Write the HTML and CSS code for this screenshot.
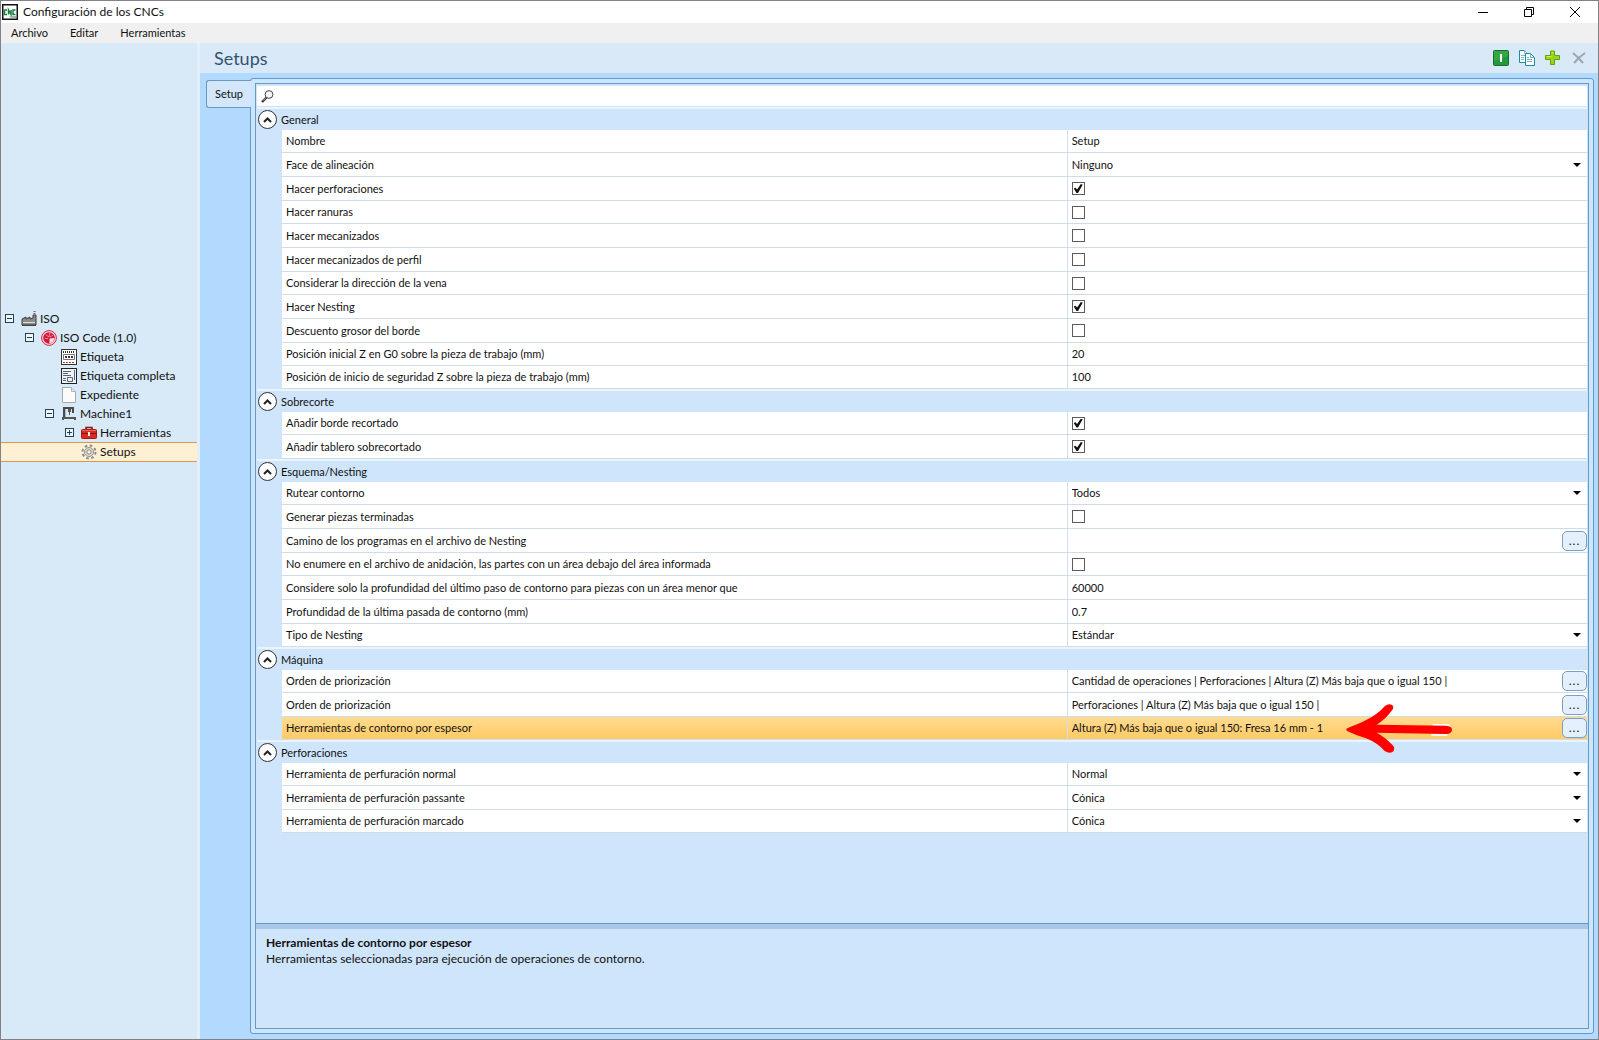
FILE: index.html
```html
<!DOCTYPE html>
<html lang="es">
<head>
    <meta charset="UTF-8">
    <meta name="viewport" content="width=device-width, initial-scale=1.0">
    <title>Configuración de los CNCs</title>
    <link rel="stylesheet" href="styles.css">
</head>
<body>
    <div class="window">
        <header class="titlebar">
            <svg class="app-icon" width="16" height="16" viewBox="0 0 16 16">
                <rect x=".75" y=".75" width="14.5" height="14.5" fill="#fff" stroke="#111" stroke-width="1.5"/>
                <path d="M5 6H2.500V10.500H5M6.500 10.500V6L9 10.500V6M13.500 6H11V10.500H13.500" fill="none" stroke="#17803f" stroke-width="1.500"/>
                <path d="M7 12h7v2H9z" fill="#a5b3aa"/>
            </svg>
            <h1>Configuración de los CNCs</h1>
            <div class="window-buttons">
                <button type="button" aria-label="Minimizar">
                    <svg width="10" height="10" viewBox="0 0 10 10"><path d="M0 5.500h10" stroke="#000"/></svg>
                </button>
                <button type="button" aria-label="Restaurar">
                    <svg width="10" height="10" viewBox="0 0 10 10" fill="none" stroke="#000"><path d="M.5 2.500h7v7h-7zM2.500 2.500v-2h7v7h-2"/></svg>
                </button>
                <button type="button" aria-label="Cerrar">
                    <svg width="10" height="10" viewBox="0 0 10 10"><path d="M0 0l10 10M10 0L0 10" stroke="#000"/></svg>
                </button>
            </div>
        </header>

        <nav class="menubar">
            <button type="button">Archivo</button>
            <button type="button">Editar</button>
            <button type="button">Herramientas</button>
        </nav>

        <div class="workspace">
            <aside class="sidebar">
                <ul class="tree">
                    <li class="node level-0">
                        <button type="button" class="expander" aria-label="Contraer ISO"></button>
                        <svg width="16" height="16" viewBox="0 0 16 16">
                            <path d="M1 14V8l4-2v2l4-2v2l3-1V4h3v10z" fill="#8b8b8b" stroke="#3e3e3e"/>
                            <path d="M2 11.500h12" stroke="#ddd"/>
                            <path d="M13.500 0v3" stroke="#666" stroke-width="2" stroke-dasharray="1 1"/>
                            <path d="M1 14.500h14" stroke="#444"/>
                        </svg>
                        <a href="#">ISO</a>
                    </li>
                    <li class="node level-1">
                        <button type="button" class="expander" aria-label="Contraer ISO Code"></button>
                        <svg width="16" height="16" viewBox="0 0 16 16">
                            <circle cx="8" cy="8" r="7.400" fill="#f9dbe1" stroke="#d61f45"/>
                            <circle cx="8" cy="8" r="5.800" fill="#cf1b3f"/>
                            <path d="M8.500 8.500V13.500Q13 12.500 13.500 8z" fill="#f9dbe1"/>
                            <path d="M5 5l3 2M4 8.500h3M9 2.500L8 7M12 5L9 7" stroke="#f3a9b8" stroke-width=".8"/>
                        </svg>
                        <a href="#">ISO Code (1.0)</a>
                    </li>
                    <li class="node level-2">
                        <svg width="16" height="16" viewBox="0 0 16 16">
                            <rect x=".5" y=".5" width="15" height="15" fill="#fff" stroke="#333"/>
                            <path d="M2 3h12" stroke="#333" stroke-width="2" stroke-dasharray="1 1"/>
                            <path d="M2.500 5.500h11v5h-11z" fill="none" stroke="#777"/>
                            <path d="M4 8h8" stroke="#333" stroke-width="2" stroke-dasharray="2 1"/>
                            <path d="M2 13.500h12" stroke="#b33" stroke-dasharray="2 1"/>
                        </svg>
                        <a href="#">Etiqueta</a>
                    </li>
                    <li class="node level-2">
                        <svg width="16" height="16" viewBox="0 0 16 16">
                            <rect x=".5" y=".5" width="15" height="15" fill="#eaf1fa" stroke="#222"/>
                            <path d="M2 3.500h8M2 5.500h5M2 7.500h8M2 10.500h3M2 12.500h3M13.500 2v10M6.500 9.500h5v4h-5z" fill="none" stroke="#5d6572"/>
                        </svg>
                        <a href="#">Etiqueta completa</a>
                    </li>
                    <li class="node level-2">
                        <svg width="16" height="16" viewBox="0 0 16 16">
                            <path d="M1.500.5h9l4 4v11h-13z" fill="#fbfbfb" stroke="#a9a9a9"/>
                            <path d="M10.500.5v4h4" fill="#e6e6e6" stroke="#b5b5b5"/>
                        </svg>
                        <a href="#">Expediente</a>
                    </li>
                    <li class="node level-2 has-children">
                        <button type="button" class="expander" aria-label="Contraer Machine1"></button>
                        <svg width="16" height="16" viewBox="0 0 16 16">
                            <path d="M3 11V2h9v5" fill="none" stroke="#4a4a4a" stroke-width="2"/>
                            <path d="M7 3h3v3H9v3H8V6H7z" fill="#555"/>
                            <path d="M1 11h14v3h-2v-1H3v1H1z" fill="#555"/>
                            <path d="M4.500 3v8" stroke="#b5b5b5"/>
                        </svg>
                        <a href="#">Machine1</a>
                    </li>
                    <li class="node level-3 has-children">
                        <button type="button" class="expander collapsed" aria-label="Expandir Herramientas"></button>
                        <svg width="16" height="16" viewBox="0 0 16 16">
                            <path d="M5 5V2.500h6V5" fill="none" stroke="#7d1712" stroke-width="1.500"/>
                            <rect x=".5" y="4.500" width="15" height="9" rx="1" fill="#dc2a20" stroke="#a31810"/>
                            <path d="M1 8.500h14" stroke="#8e120c"/>
                            <path d="M1 5.500h14" stroke="#f0685f"/>
                            <rect x="7" y="7" width="2" height="4" fill="#eee"/>
                        </svg>
                        <a href="#">Herramientas</a>
                    </li>
                    <li class="node level-3 selected">
                        <svg width="16" height="16" viewBox="0 0 16 16">
                            <circle cx="8" cy="8" r="6.500" fill="none" stroke="#8c8c8c" stroke-width="2" stroke-dasharray="2.600 2.500"/>
                            <circle cx="8" cy="8" r="4.500" fill="#f4ead9" stroke="#8f8f8f"/>
                            <circle cx="8" cy="8" r="3.500" fill="none" stroke="#cfcfcf"/>
                            <circle cx="8" cy="8" r="2.200" fill="#fdf0d4" stroke="#858585"/>
                        </svg>
                        <a href="#">Setups</a>
                    </li>
                </ul>
            </aside>

            <main class="content">
                <div class="content-header">
                    <h2>Setups</h2>
                    <div class="toolbar">
                        <button type="button" aria-label="Activar">
                            <svg width="16" height="16" viewBox="0 0 16 16">
                                <rect x=".5" y=".5" width="15" height="15" rx="1" fill="#1f9a3c" stroke="#14702b"/>
                                <path d="M1 1h14v5L1 11z" fill="#48b04d" opacity=".6"/>
                                <path d="M8 4v8" stroke="#fff" stroke-width="2"/>
                            </svg>
                        </button>
                        <button type="button" aria-label="Duplicar">
                            <svg width="16" height="16" viewBox="0 0 16 16" fill="#fff" stroke="#1e8aa3">
                                <path d="M.5.500h5l3 3v9h-8z"/>
                                <path d="M5.500.5v3h3M2 5.500h4M2 7.500h3M2 9.500h3" stroke="#7cc0cf"/>
                                <path d="M6.500 3.500h5l4 4v8h-9z"/>
                                <path d="M11.500 3.500v4h4M8 7.500h2M8 9.500h5M8 11.500h5" fill="none" stroke="#6bb6c7"/>
                            </svg>
                        </button>
                        <button type="button" aria-label="Agregar">
                            <svg width="16" height="16" viewBox="0 0 16 16">
                                <path d="M5.500 1h4v4.500H14.500v4H9.500V14.500h-4V9.500H.5v-4h5z" fill="#9bd616" stroke="#5fa315"/>
                                <path d="M6.500 2.500h2M1.500 6.500h5" stroke="#cdf06b"/>
                            </svg>
                        </button>
                        <button type="button" aria-label="Eliminar">
                            <svg width="16" height="16" viewBox="0 0 16 16" fill="none" stroke="#9da5ad">
                                <path d="M2 3q5 4 10 10" stroke-width="2"/>
                                <path d="M14 3Q8 7 3 13" stroke-width="2"/>
                            </svg>
                        </button>
                    </div>
                </div>

                <div class="tab-area">
                    <div class="tabs">
                        <button type="button" class="tab">Setup</button>
                    </div>
                    <div class="tab-page">
                        <div class="property-grid">
                            <label class="search">
                                <svg width="13" height="13" viewBox="0 0 13 13">
                                    <circle cx="8" cy="4.500" r="3.900" fill="#f5f5f5" stroke="#444"/>
                                    <path d="M5.500 7.500L1 12" stroke="#333" stroke-width="2.400"/>
                                    <path d="M5 7.600L2 10.600" stroke="#ccc" stroke-width=".8"/>
                                </svg>
                                <input type="search" aria-label="Buscar">
                            </label>

                            <div class="properties">
                                <table>
                                    <colgroup>
                                        <col class="col-gutter">
                                        <col class="col-name">
                                        <col>
                                    </colgroup>
                                    <tbody>
                                        <tr class="group">
                                            <th colspan="3"><div class="group-title"><button type="button" aria-label="Contraer General"><svg width="9" height="6" viewBox="0 0 9 6"><path d="M1 5l3.500-3.500L8 5" fill="none" stroke="#222" stroke-width="2"/></svg></button>General</div></th>
                                        </tr>
                                        <tr>
                                            <td class="gutter"></td>
                                            <td><label for="nombre">Nombre</label></td>
                                            <td class="value"><input type="text" id="nombre" value="Setup"></td>
                                        </tr>
                                        <tr>
                                            <td class="gutter"></td>
                                            <td><label for="face">Face de alineación</label></td>
                                            <td class="value"><div class="combo"><select id="face"><option>Ninguno</option></select><svg width="8" height="4" viewBox="0 0 8 4"><path d="M0 0h8L4 4z"/></svg></div></td>
                                        </tr>
                                        <tr>
                                            <td class="gutter"></td>
                                            <td><label for="perforaciones">Hacer perforaciones</label></td>
                                            <td class="value"><input type="checkbox" id="perforaciones" checked></td>
                                        </tr>
                                        <tr>
                                            <td class="gutter"></td>
                                            <td><label for="ranuras">Hacer ranuras</label></td>
                                            <td class="value"><input type="checkbox" id="ranuras"></td>
                                        </tr>
                                        <tr>
                                            <td class="gutter"></td>
                                            <td><label for="mecanizados">Hacer mecanizados</label></td>
                                            <td class="value"><input type="checkbox" id="mecanizados"></td>
                                        </tr>
                                        <tr>
                                            <td class="gutter"></td>
                                            <td><label for="perfil">Hacer mecanizados de perfil</label></td>
                                            <td class="value"><input type="checkbox" id="perfil"></td>
                                        </tr>
                                        <tr>
                                            <td class="gutter"></td>
                                            <td><label for="vena">Considerar la dirección de la vena</label></td>
                                            <td class="value"><input type="checkbox" id="vena"></td>
                                        </tr>
                                        <tr>
                                            <td class="gutter"></td>
                                            <td><label for="nesting">Hacer Nesting</label></td>
                                            <td class="value"><input type="checkbox" id="nesting" checked></td>
                                        </tr>
                                        <tr>
                                            <td class="gutter"></td>
                                            <td><label for="descuento">Descuento grosor del borde</label></td>
                                            <td class="value"><input type="checkbox" id="descuento"></td>
                                        </tr>
                                        <tr>
                                            <td class="gutter"></td>
                                            <td><label for="posicion-z">Posición inicial Z en G0 sobre la pieza de trabajo (mm)</label></td>
                                            <td class="value"><input type="text" id="posicion-z" value="20"></td>
                                        </tr>
                                        <tr>
                                            <td class="gutter"></td>
                                            <td><label for="seguridad-z">Posición de inicio de seguridad Z sobre la pieza de trabajo (mm)</label></td>
                                            <td class="value"><input type="text" id="seguridad-z" value="100"></td>
                                        </tr>
                                    </tbody>
                                    <tbody>
                                        <tr class="group">
                                            <th colspan="3"><div class="group-title"><button type="button" aria-label="Contraer Sobrecorte"><svg width="9" height="6" viewBox="0 0 9 6"><path d="M1 5l3.500-3.500L8 5" fill="none" stroke="#222" stroke-width="2"/></svg></button>Sobrecorte</div></th>
                                        </tr>
                                        <tr>
                                            <td class="gutter"></td>
                                            <td><label for="borde">Añadir borde recortado</label></td>
                                            <td class="value"><input type="checkbox" id="borde" checked></td>
                                        </tr>
                                        <tr>
                                            <td class="gutter"></td>
                                            <td><label for="tablero">Añadir tablero sobrecortado</label></td>
                                            <td class="value"><input type="checkbox" id="tablero" checked></td>
                                        </tr>
                                    </tbody>
                                    <tbody>
                                        <tr class="group">
                                            <th colspan="3"><div class="group-title"><button type="button" aria-label="Contraer Esquema/Nesting"><svg width="9" height="6" viewBox="0 0 9 6"><path d="M1 5l3.500-3.500L8 5" fill="none" stroke="#222" stroke-width="2"/></svg></button>Esquema/Nesting</div></th>
                                        </tr>
                                        <tr>
                                            <td class="gutter"></td>
                                            <td><label for="rutear">Rutear contorno</label></td>
                                            <td class="value"><div class="combo"><select id="rutear"><option>Todos</option></select><svg width="8" height="4" viewBox="0 0 8 4"><path d="M0 0h8L4 4z"/></svg></div></td>
                                        </tr>
                                        <tr>
                                            <td class="gutter"></td>
                                            <td><label for="terminadas">Generar piezas terminadas</label></td>
                                            <td class="value"><input type="checkbox" id="terminadas"></td>
                                        </tr>
                                        <tr>
                                            <td class="gutter"></td>
                                            <td><label for="camino">Camino de los programas en el archivo de Nesting</label></td>
                                            <td class="value"><div class="picker"><input type="text" id="camino"><button type="button">...</button></div></td>
                                        </tr>
                                        <tr>
                                            <td class="gutter"></td>
                                            <td><label for="enumere">No enumere en el archivo de anidación, las partes con un área debajo del área informada</label></td>
                                            <td class="value"><input type="checkbox" id="enumere"></td>
                                        </tr>
                                        <tr>
                                            <td class="gutter"></td>
                                            <td><label for="area">Considere solo la profundidad del último paso de contorno para piezas con un área menor que</label></td>
                                            <td class="value"><input type="text" id="area" value="60000"></td>
                                        </tr>
                                        <tr>
                                            <td class="gutter"></td>
                                            <td><label for="profundidad">Profundidad de la última pasada de contorno (mm)</label></td>
                                            <td class="value"><input type="text" id="profundidad" value="0.7"></td>
                                        </tr>
                                        <tr>
                                            <td class="gutter"></td>
                                            <td><label for="tipo">Tipo de Nesting</label></td>
                                            <td class="value"><div class="combo"><select id="tipo"><option>Estándar</option></select><svg width="8" height="4" viewBox="0 0 8 4"><path d="M0 0h8L4 4z"/></svg></div></td>
                                        </tr>
                                    </tbody>
                                    <tbody>
                                        <tr class="group">
                                            <th colspan="3"><div class="group-title"><button type="button" aria-label="Contraer Máquina"><svg width="9" height="6" viewBox="0 0 9 6"><path d="M1 5l3.500-3.500L8 5" fill="none" stroke="#222" stroke-width="2"/></svg></button>Máquina</div></th>
                                        </tr>
                                        <tr>
                                            <td class="gutter"></td>
                                            <td><label for="orden-1">Orden de priorización</label></td>
                                            <td class="value"><div class="picker"><input type="text" id="orden-1" value="Cantidad de operaciones | Perforaciones | Altura (Z) Más baja que o igual 150 |"><button type="button">...</button></div></td>
                                        </tr>
                                        <tr>
                                            <td class="gutter"></td>
                                            <td><label for="orden-2">Orden de priorización</label></td>
                                            <td class="value"><div class="picker"><input type="text" id="orden-2" value="Perforaciones | Altura (Z) Más baja que o igual 150 |"><button type="button">...</button></div></td>
                                        </tr>
                                        <tr class="current">
                                            <td class="gutter"></td>
                                            <td><label for="contorno">Herramientas de contorno por espesor</label></td>
                                            <td class="value">
                                                <div class="picker">
                                                    <input type="text" id="contorno" value="Altura (Z) Más baja que o igual 150: Fresa 16 mm - 1">
                                                    <button type="button">...</button>
                                                    <svg class="pointer" width="106" height="50" viewBox="0 0 318 150">
                                                        <path d="M260 63h50v8h-50zM256 92h48v6h-48z" fill="#fff"/>
                                                        <path d="M1 77C40 62 90 42 116 10Q128 0 138 6Q146 12 138 22Q120 48 92 65L300 68Q318 70 318 80Q318 92 300 93L92 89Q120 104 143 130Q148 142 138 148Q128 152 116 144Q95 120 60 106Q30 97 3 84Q0 80 1 77Z" fill="#f00"/>
                                                    </svg>
                                                </div>
                                            </td>
                                        </tr>
                                    </tbody>
                                    <tbody>
                                        <tr class="group">
                                            <th colspan="3"><div class="group-title"><button type="button" aria-label="Contraer Perforaciones"><svg width="9" height="6" viewBox="0 0 9 6"><path d="M1 5l3.500-3.500L8 5" fill="none" stroke="#222" stroke-width="2"/></svg></button>Perforaciones</div></th>
                                        </tr>
                                        <tr>
                                            <td class="gutter"></td>
                                            <td><label for="normal">Herramienta de perfuración normal</label></td>
                                            <td class="value"><div class="combo"><select id="normal"><option>Normal</option></select><svg width="8" height="4" viewBox="0 0 8 4"><path d="M0 0h8L4 4z"/></svg></div></td>
                                        </tr>
                                        <tr>
                                            <td class="gutter"></td>
                                            <td><label for="passante">Herramienta de perfuración passante</label></td>
                                            <td class="value"><div class="combo"><select id="passante"><option>Cónica</option></select><svg width="8" height="4" viewBox="0 0 8 4"><path d="M0 0h8L4 4z"/></svg></div></td>
                                        </tr>
                                        <tr>
                                            <td class="gutter"></td>
                                            <td><label for="marcado">Herramienta de perfuración marcado</label></td>
                                            <td class="value"><div class="combo"><select id="marcado"><option>Cónica</option></select><svg width="8" height="4" viewBox="0 0 8 4"><path d="M0 0h8L4 4z"/></svg></div></td>
                                        </tr>
                                    </tbody>
                                </table>
                            </div>

                            <section class="description">
                                <h3>Herramientas de contorno por espesor</h3>
                                <p>Herramientas seleccionadas para ejecución de operaciones de contorno.</p>
                            </section>
                        </div>
                    </div>
                </div>
            </main>
        </div>
    </div>
</body>
</html>
```
FILE: styles.css
```css
* {
    margin: 0;
    padding: 0;
    box-sizing: border-box;
}

body {
    font-family: Lato, "Open Sans", sans-serif;
    font-size: 12px;
    line-height: 16px;
    color: #111;
}

button,
input,
select {
    font: inherit;
    color: inherit;
    background: none;
    border: none;
    outline: none;
}

svg {
    display: block;
    flex: none;
}

.window {
    display: flex;
    flex-direction: column;
    height: 100vh;
    border: 1px solid #808288;
    background: #fff;
}

/* Title bar and menu */

.titlebar {
    display: flex;
    align-items: center;
    gap: 5px;
    height: 22px;
    padding-left: 1px;
}

.titlebar h1 {
    flex: 1;
    font-size: 12px;
    font-weight: 400;
}

.window-buttons {
    display: flex;
}

.window-buttons button {
    display: flex;
    align-items: center;
    justify-content: center;
    width: 46px;
    height: 20px;
}

.menubar {
    display: flex;
    gap: 22px;
    height: 20px;
    padding-left: 10px;
    background: #f0f0f0;
    font-size: 11px;
}

.workspace {
    display: flex;
    flex: 1;
    min-height: 0;
}

/* Tree */

.sidebar {
    flex: none;
    width: 199px;
    padding-top: 266px;
    background: #d8e9f7;
    border-right: 3px solid #e4effa;
}

.tree {
    list-style: none;
}

.node {
    display: flex;
    align-items: center;
    gap: 3px;
    height: 19px;
}

.node a {
    color: inherit;
    text-decoration: none;
}

.level-0 {
    padding-left: 4px;
}

.level-1 {
    padding-left: 24px;
}

.level-2 {
    padding-left: 60px;
}

.level-2.has-children {
    padding-left: 44px;
}

.level-3 {
    padding-left: 80px;
}

.level-3.has-children {
    padding-left: 64px;
}

.node.selected {
    height: 20px;
    background: #fdf0d4;
    border-top: 1px solid #d99b4a;
    border-bottom: 1px solid #d99b4a;
}

.expander {
    width: 9px;
    height: 9px;
    margin-right: 4px;
    border: 1px solid #23414f;
    background: linear-gradient(#23414f, #23414f) center / 5px 1px no-repeat #eef6fc;
}

.expander.collapsed {
    background: linear-gradient(#23414f, #23414f) center / 5px 1px no-repeat,
        linear-gradient(#23414f, #23414f) center / 1px 5px no-repeat #eef6fc;
}

/* Content */

.content {
    display: flex;
    flex: 1;
    flex-direction: column;
    min-width: 0;
    background: #b2daff;
}

.content-header {
    display: flex;
    align-items: center;
    justify-content: space-between;
    height: 30px;
    padding: 0 11px 0 14px;
    background: #d9e9f8;
}

.content-header h2 {
    font-size: 18px;
    font-weight: 400;
    color: #34536f;
}

.toolbar {
    display: flex;
    gap: 10px;
}

.tab-area {
    display: flex;
    flex: 1;
    min-height: 0;
    padding: 5px 4px 5px 6px;
}

.tabs {
    z-index: 1;
    padding-top: 2px;
    margin-right: -1px;
}

.tab {
    height: 28px;
    width: 45px;
    border: 1px solid #6699c4;
    border-right: none;
    border-radius: 3px 0 0 3px;
    background: #d3e6fb;
    font-size: 11px;
}

.tab-page {
    flex: 1;
    min-width: 0;
    padding: 4px;
    border: 1px solid #6699c4;
    border-radius: 3px;
    background: #cce6ff;
}

.property-grid {
    display: flex;
    flex-direction: column;
    height: 100%;
    border: 1px solid #6699c4;
    background: #cfe5fc;
}

.search {
    display: flex;
    align-items: center;
    gap: 6px;
    height: 20px;
    margin: 2px 1px 1px;
    padding-left: 4px;
    background: #fff;
}

.search input {
    flex: 1;
    height: 20px;
}

.properties {
    flex: 1;
    min-height: 0;
    padding: 0 1px;
}

/* Property table */

table {
    width: 100%;
    table-layout: fixed;
    border-spacing: 0;
    font-size: 11px;
}

.col-gutter {
    width: 25px;
}

.col-name {
    width: 59%;
}

th {
    height: 23px;
    border-top: 2px solid #eaf4fd;
    background: #cfe5fc;
    font-weight: 400;
    text-align: left;
}

.group-title {
    display: flex;
    align-items: center;
    gap: 4px;
    height: 21px;
    padding-left: 1px;
}

.group-title button {
    display: flex;
    align-items: center;
    justify-content: center;
    width: 19px;
    height: 19px;
    border: 1px solid #333;
    border-radius: 50%;
    background: #fff;
}

td {
    height: 24px;
    padding-left: 4px;
    border-bottom: 1px solid #d0dde8;
    background: #fff;
}

tr:nth-child(3n+2) td,
tr:nth-child(even):last-child td {
    height: 23px;
}

td.gutter {
    border-bottom-color: #cfe5fc;
    background: #cfe5fc;
}

td.value {
    border-left: 1px solid #cfe0ec;
}

td label,
td input[type="text"],
td select {
    display: block;
    width: 100%;
    height: 20px;
    line-height: 20px;
}

.current td {
    background: linear-gradient(#ffdb90, #ffcb64);
}

.current td.gutter {
    background: #cfe5fc;
}

input[type="checkbox"] {
    appearance: none;
    display: block;
    width: 13px;
    height: 13px;
    border: 1px solid #5c5c5c;
    background: #fff;
}

input[type="checkbox"]:checked::after {
    content: "";
    display: block;
    width: 9px;
    height: 9px;
    margin: 1px;
    background: #111;
    clip-path: polygon(0 50%, 20% 42%, 38% 62%, 80% 0, 100% 8%, 48% 100%, 32% 100%);
}

.combo {
    display: grid;
    align-items: center;
}

.combo select,
.combo svg {
    grid-area: 1 / 1;
}

.combo select {
    appearance: none;
}

.combo svg {
    justify-self: end;
    margin-right: 6px;
    pointer-events: none;
}

.picker {
    display: flex;
    align-items: center;
    position: relative;
}

.picker button {
    flex: none;
    width: 25px;
    height: 20px;
    border: 1px solid #7f9dbd;
    border-radius: 5px;
    background: #e4f0fd;
    font-size: 12px;
    line-height: 18px;
    letter-spacing: 1px;
}

.pointer {
    position: absolute;
    left: 274px;
    top: -15px;
}

/* Description pane */

.description {
    flex: none;
    min-height: 105px;
    padding: 11px 10px;
    border-top: 1px solid #6699c4;
    box-shadow: inset 0 5px #a8c8e8;
}

.description h3 {
    font-size: 12px;
    font-weight: 700;
}
```
